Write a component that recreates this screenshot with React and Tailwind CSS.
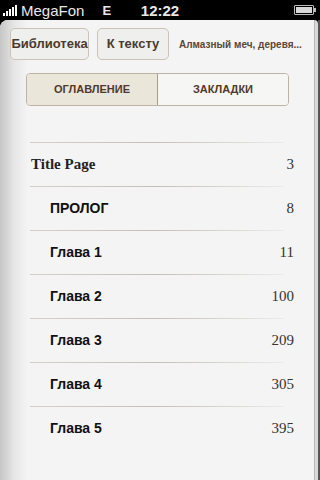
const rows = [
  { title: "Title Page", page: "3", serif: true },
  { title: "ПРОЛОГ", page: "8" },
  { title: "Глава 1", page: "11" },
  { title: "Глава 2", page: "100" },
  { title: "Глава 3", page: "209" },
  { title: "Глава 4", page: "305" },
  { title: "Глава 5", page: "395" },
];

function StatusBar() {
  return (
    <div className="relative flex h-[20px] items-center bg-black px-[3px] text-white">
      <div className="flex items-end gap-[1px]">
        <span className="h-[3px] w-[2px] bg-white" />
        <span className="h-[5px] w-[2px] bg-white" />
        <span className="h-[7px] w-[2px] bg-white" />
        <span className="h-[9px] w-[2px] bg-white" />
        <span className="h-[11px] w-[2px] bg-white" />
      </div>
      <span className="ml-[4px] text-[15px] leading-none text-[#e8e8e8]">MegaFon</span>
      <span className="ml-[18px] text-[13px] font-bold leading-none text-[#e8e8e8]">E</span>
      <span className="absolute left-1/2 top-[3px] -translate-x-1/2 text-[15px] font-bold leading-none text-[#e8e8e8]">
        12:22
      </span>
      <div className="absolute right-[4px] top-[5px] flex items-center">
        <div className="h-[10px] w-[20px] rounded-[1px] border border-[#bdbdbd] p-[1px]">
          <div className="h-full w-full bg-[#d8d8d8]" />
        </div>
        <div className="h-[4px] w-[2px] bg-[#bdbdbd]" />
      </div>
    </div>
  );
}

function Row({ title, page, serif }) {
  return (
    <div className="flex h-[43px] items-center justify-between pr-[20px]">
      {serif ? (
        <span className="pl-[31px] text-[15px] font-bold text-[#222]" style={{ fontFamily: '"Liberation Serif", serif' }}>
          {title}
        </span>
      ) : (
        <span className="pl-[50px] text-[14px] font-bold text-[#111]">{title}</span>
      )}
      <span className="text-[15px] text-[#333]" style={{ fontFamily: '"Liberation Serif", serif' }}>
        {page}
      </span>
    </div>
  );
}

function Sep() {
  return <div className="mx-[30px] h-px bg-gradient-to-r from-[#d4d0c8] via-[#c4bfb6] to-[#ecebe8]" />;
}

export default function App() {
  return (
    <div className="h-[480px] w-[320px] overflow-hidden bg-black" style={{ fontFamily: '"Liberation Sans", Arial, sans-serif' }}>
      <StatusBar />
      <div className="flex h-[460px]">
        <div className="relative h-full w-[314px] rounded-tl-[8px] bg-[#f4f4f4]">
          <div className="absolute inset-y-0 left-0 w-[28px] rounded-tl-[8px] bg-gradient-to-r from-[#c6c6c6] via-[#e6e6e6] to-transparent" />
          <div className="relative flex flex-col">
            <div className="flex items-center pl-[10px] pt-[8px]">
              <button className="h-[32px] w-[79px] rounded-[5px] border border-[#c9c3ba] bg-[#efefed] text-[13px] font-bold text-[#4a3a2e]">
                Библиотека
              </button>
              <button className="ml-[8px] h-[32px] w-[72px] rounded-[5px] border border-[#c9c3ba] bg-[#efefed] text-[13px] font-bold text-[#4a3a2e]">
                К тексту
              </button>
              <span className="ml-[10px] text-[10px] font-bold text-[#5c4634]">Алмазный меч, деревя...</span>
            </div>
            <div className="ml-[26px] mt-[13px] flex h-[33px] w-[263px] overflow-hidden rounded-[4px] border border-[#bdb3a4] text-[11px] font-bold text-[#4e3a2c]">
              <div className="flex w-[131px] items-center justify-center border-r border-[#a89d8c] bg-[#ebe6da]">
                ОГЛАВЛЕНИЕ
              </div>
              <div className="flex flex-1 items-center justify-center bg-[#f6f6f4]">ЗАКЛАДКИ</div>
            </div>
            <div className="mt-[36px]">
              <Sep />
              {rows.map((r) => (
                <div key={r.title}>
                  <Row {...r} />
                  {r.title !== "Глава 5" && <Sep />}
                </div>
              ))}
            </div>
          </div>
        </div>
        <div className="h-full w-[4px] rounded-tr-[4px] border-l border-[#b8b8b8] bg-[#d9d9d9]" />
        <div className="h-full w-[2px] bg-[#555]" />
      </div>
    </div>
  );
}
